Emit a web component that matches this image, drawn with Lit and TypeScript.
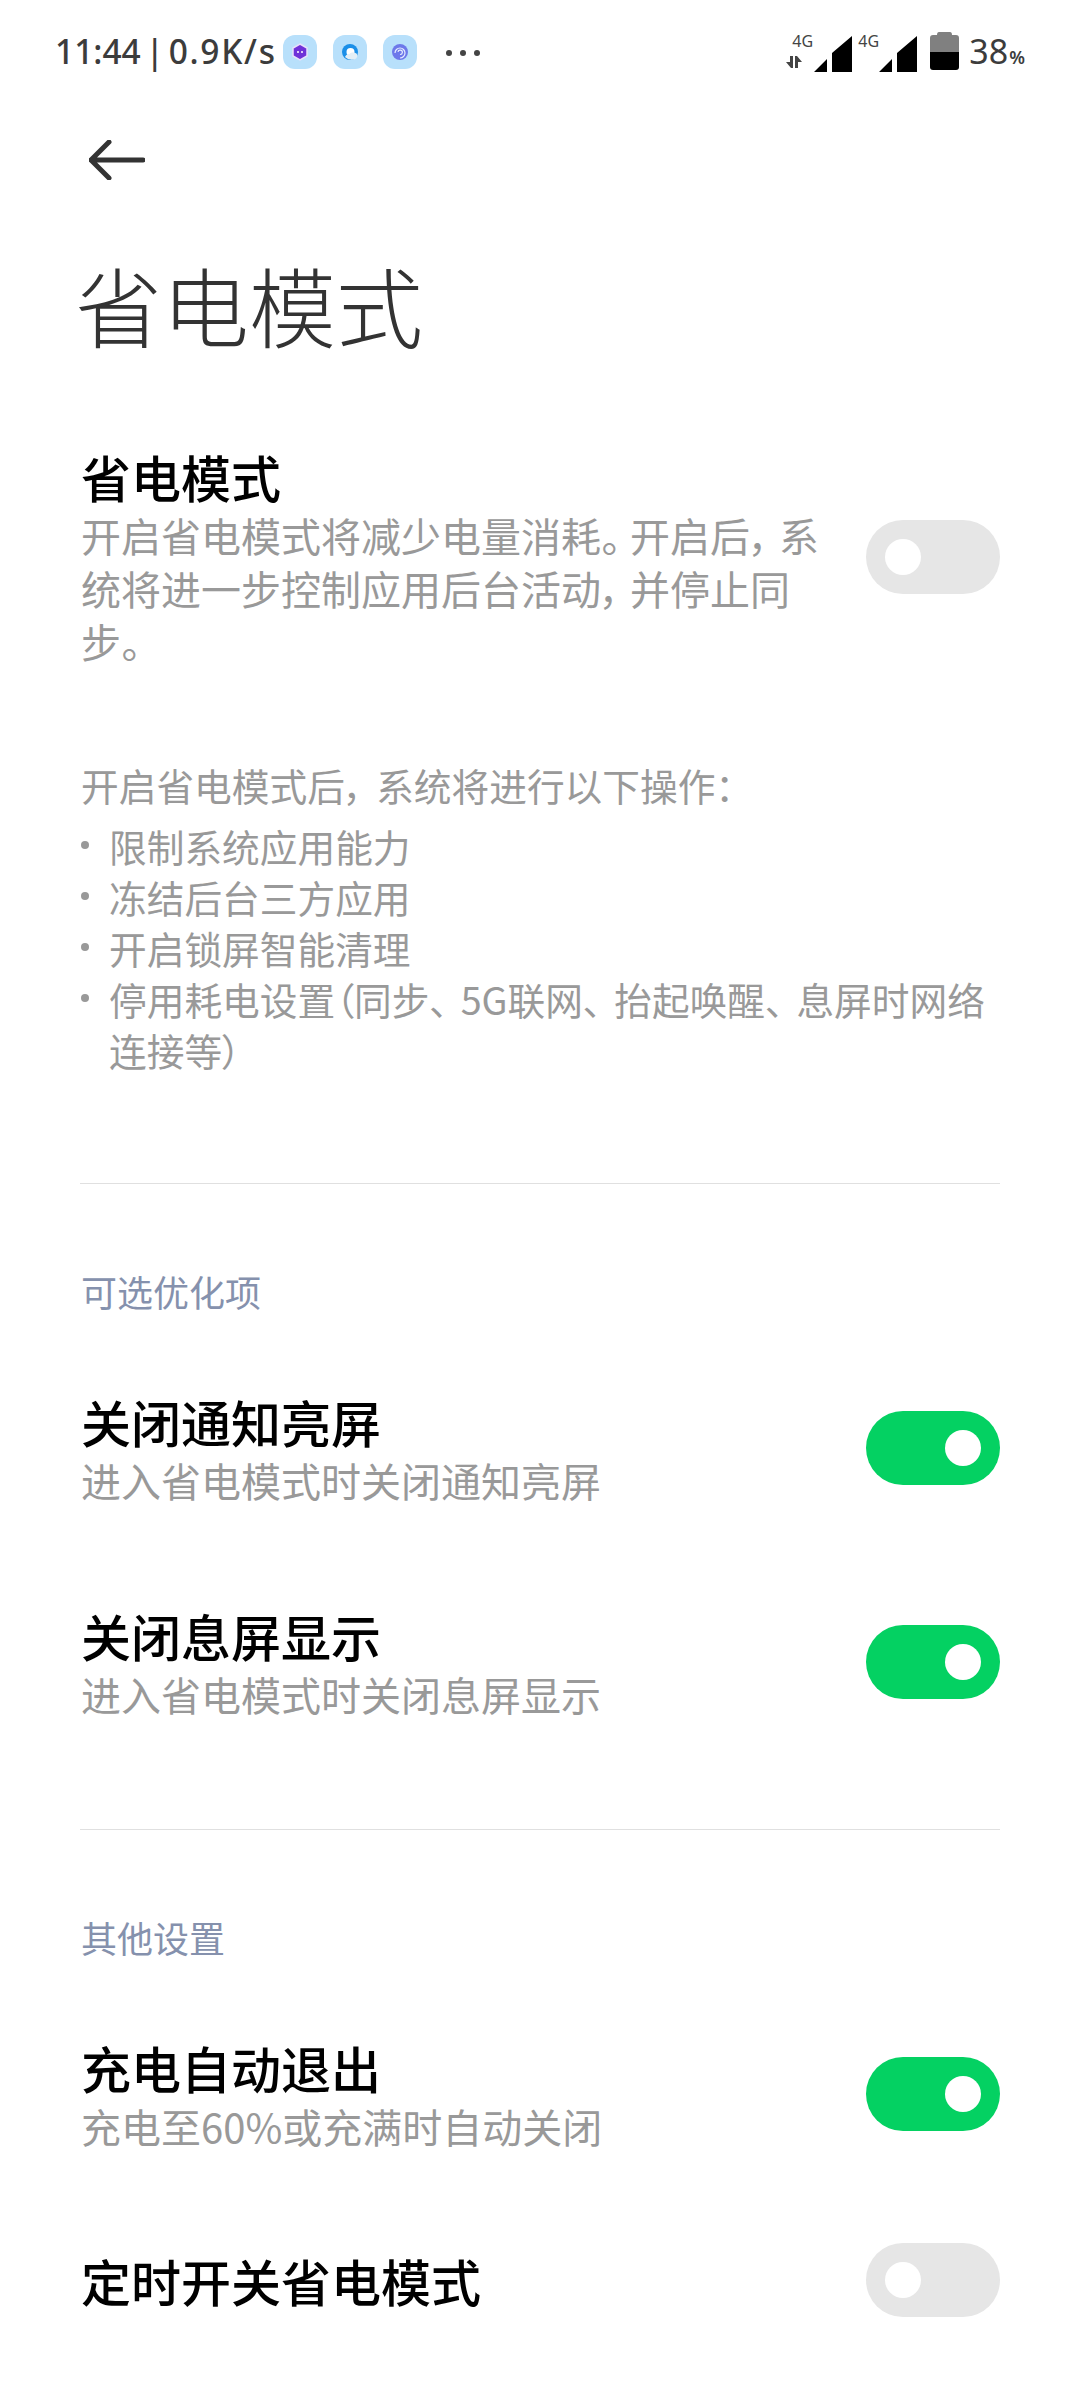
import { LitElement, html, css } from "lit";
import { customElement } from "lit/decorators.js";

const sw = (on: boolean) => html`<div class="sw ${on ? "on" : ""}"><i></i></div>`;
const signal = html`<svg class="sig" width="38" height="36" viewBox="0 0 38 36"><path d="M0 36 L13 23 V36Z M18 36 V17 L38 0 V36Z" fill="#000"/></svg>`;
const p = (c: string) => html`<span class="p">${c}</span>`;

@customElement("app-root")
export class AppRoot extends LitElement {
  static styles = css`
    :host { display: block; width: 1080px; height: 2400px; background: #fff; overflow: hidden;
      font-family: "Noto Sans CJK SC", "Noto Sans", sans-serif; color: #000; }
    .status { height: 104px; box-sizing: border-box; padding: 32px 55px 0 55px; display: flex; align-items: flex-start; }
    .time { font: 500 33.5px/38px "Noto Sans", sans-serif; color: #3c3c3c; width: 228px; white-space: nowrap; word-spacing: -4px; }
    .time b { font-weight: 500; letter-spacing: 1.7px; }
    .nicons { display: flex; gap: 16px; }
    .nic { width: 34px; height: 34px; border-radius: 12px; background: #b8e0fb; display: flex; align-items: center; justify-content: center; margin-top: 3px; }
    .dots { display: flex; gap: 8px; margin: 18px 0 0 29px; }
    .dots i { width: 6px; height: 6px; border-radius: 50%; background: #444; }
    .right { margin-left: auto; display: flex; align-items: flex-start; }
    .net { position: relative; width: 66px; height: 72px; display: flex; justify-content: flex-end; }
    .net.b { width: 65px; }
    .net span { position: absolute; top: 1px; left: 6px; font: 400 16px/16px "Noto Sans", sans-serif; color: #444; }
    .arrows { position: absolute; left: 0; top: 24px; }
    .sig { margin-top: 4px; }
    .bat { margin: 0 0 0 13px; }
    .pct { font: 400 34px/38px "Noto Sans", sans-serif; color: #3c3c3c; margin-left: 10px; white-space: nowrap; }
    .pct small { font-size: 18px; font-weight: 600; margin-left: 1px; }
    .back { padding: 36px 0 0 89px; height: 60px; }
    .back svg { display: block; }
    h1 { margin: 50px 0 0 75px; font-size: 87px; font-weight: 300; line-height: 108px; color: #333; }
    .row { display: flex; align-items: center; padding: 49px 80px 49px 81px; justify-content: space-between; }
    .row.single { padding-top: 41px; padding-bottom: 41px; }
    .txt { width: 745px; }
    .t { font-size: 50px; font-weight: 500; line-height: 60px; white-space: nowrap; }
    .s { font-size: 40px; line-height: 53px; color: #999; margin-top: 3px; font-feature-settings: "palt"; }
    .p { margin-right: 9px; }
    .sw { flex: none; width: 134px; height: 74px; border-radius: 37px; background: #e6e6e6; position: relative; }
    .sw i { position: absolute; top: 19px; left: 19px; width: 36px; height: 36px; border-radius: 50%; background: #fff; }
    .sw.on { background: #04d162; }
    .sw.on i { left: auto; right: 19px; }
    .sub .sw { margin-bottom: 2px; }
    .first { margin-top: 39px; }
    .intro { margin: 42px 80px 0 81px; font-size: 37.7px; line-height: 51px; color: #999; font-feature-settings: "palt"; }
    .intro .p { margin-right: 12.5px; }
    ul { list-style: none; margin: 10px 0 0; padding: 0; }
    li { position: relative; padding-left: 28px; }
    li::before { content: ""; position: absolute; left: 0; top: 21px; width: 8px; height: 8px; border-radius: 50%; background: #999; }
    .rule { height: 1px; background: #e0e0e0; margin: 108px 80px 0; }
    .rule.tight { margin-top: 59px; }
    .head { margin: 82px 0 26px 81px; font-size: 36px; line-height: 50px; color: #8591ad; }
  `;
  render() {
    return html`
      <div class="status">
        <div class="time">11:44 | <b>0.9K/s</b></div>
        <div class="nicons">
          <div class="nic"><svg width="18" height="18" viewBox="0 0 18 18"><path d="M9 1 L16 5 V13 L9 17 L2 13 V5Z" fill="#6f32d8" stroke="#e8e0fb" stroke-width="1.5"/><circle cx="7" cy="9" r="1" fill="#fff"/><circle cx="11" cy="9" r="1" fill="#fff"/></svg></div>
          <div class="nic"><svg width="18" height="18" viewBox="0 0 18 18"><circle cx="9" cy="9" r="8" fill="#1b8fe8"/><circle cx="9.5" cy="9" r="4" fill="#fff"/><path d="M4 14c1-2.5 3-3 4.500-3 1-2 5-2 7-.5 1 1 1 3 0 4.500-1.500 2-7 3-11.500-1z" fill="#e4eff6"/></svg></div>
          <div class="nic"><svg width="18" height="18" viewBox="0 0 18 18"><circle cx="9" cy="9" r="8" fill="#6d78ea"/><path d="M4 10a5 5 0 1 1 5 5M7 9a2.200 2.200 0 1 1 2 2.500" fill="none" stroke="#e6ecff" stroke-width="1.200"/></svg></div>
        </div>
        <div class="dots"><i></i><i></i><i></i></div>
        <div class="right">
          <div class="net"><span>4G</span>
            <svg class="arrows" width="16" height="12" viewBox="0 0 16 12"><path d="M0 6 L4 6 V0 H7 V12 H5Z M9 0 H11 L16 6 H12 V12 H9Z" fill="#444"/></svg>
            ${signal}</div>
          <div class="net b"><span>4G</span>${signal}</div>
          <svg class="bat" width="29" height="38" viewBox="0 0 29 38"><path d="M9 0 H20 Q22 0 22 3 H26 Q29 3 29 6 V20 H0 V6 Q0 3 3 3 H7 Q7 0 9 0Z" fill="#808080"/><path d="M0 20 H29 V35 Q29 38 26 38 H3 Q0 38 0 35Z" fill="#000"/></svg>
          <div class="pct">38<small>%</small></div>
        </div>
      </div>
      <div class="back"><svg width="56" height="40" viewBox="0 0 56 40"><path d="M20 2 L2 20 L20 38 M2 20 H54" fill="none" stroke="#333" stroke-width="5" stroke-linecap="round" stroke-linejoin="round"/></svg></div>
      <h1>省电模式</h1>
      <div class="row first">
        <div class="txt"><div class="t">省电模式</div><div class="s">开启省电模式将减少电量消耗${p("。")}开启后${p("，")}系统将进一步控制应用后台活动${p("，")}并停止同步。</div></div>
        ${sw(false)}
      </div>
      <div class="intro">开启省电模式后${p("，")}系统将进行以下操作：
        <ul>
          <li>限制系统应用能力</li>
          <li>冻结后台三方应用</li>
          <li>开启锁屏智能清理</li>
          <li>停用耗电设置（同步${p("、")}5G联网${p("、")}抬起唤醒${p("、")}息屏时网络连接等）</li>
        </ul>
      </div>
      <div class="rule"></div>
      <div class="head">可选优化项</div>
      <div class="row sub"><div class="txt"><div class="t">关闭通知亮屏</div><div class="s">进入省电模式时关闭通知亮屏</div></div>${sw(true)}</div>
      <div class="row sub"><div class="txt"><div class="t">关闭息屏显示</div><div class="s">进入省电模式时关闭息屏显示</div></div>${sw(true)}</div>
      <div class="rule tight"></div>
      <div class="head">其他设置</div>
      <div class="row sub"><div class="txt"><div class="t">充电自动退出</div><div class="s">充电至60%或充满时自动关闭</div></div>${sw(true)}</div>
      <div class="row single"><div class="txt"><div class="t">定时开关省电模式</div></div>${sw(false)}</div>
    `;
  }
}
